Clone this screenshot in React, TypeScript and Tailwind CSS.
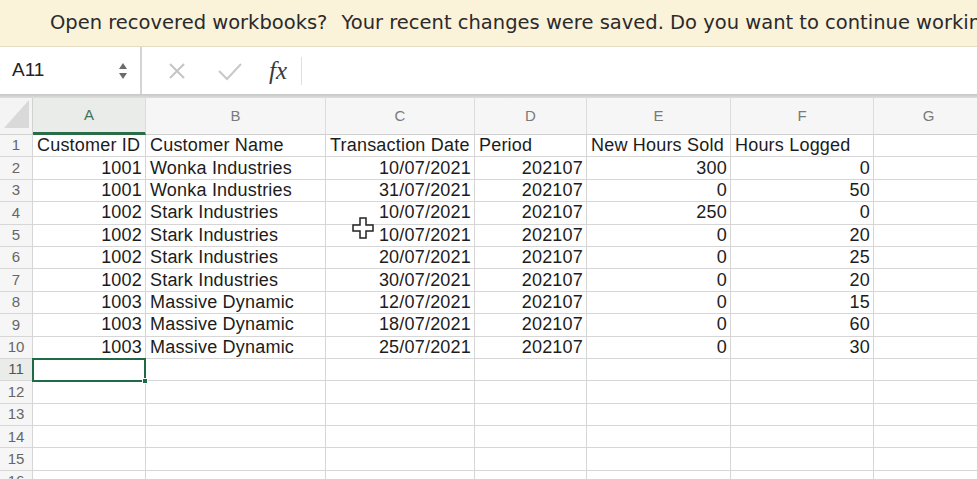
import { Fragment } from 'react';

type Row = [string, string, string, string, string, string];

const ROWS: Row[] = [
  ['1001', 'Wonka Industries', '10/07/2021', '202107', '300', '0'],
  ['1001', 'Wonka Industries', '31/07/2021', '202107', '0', '50'],
  ['1002', 'Stark Industries', '10/07/2021', '202107', '250', '0'],
  ['1002', 'Stark Industries', '10/07/2021', '202107', '0', '20'],
  ['1002', 'Stark Industries', '20/07/2021', '202107', '0', '25'],
  ['1002', 'Stark Industries', '30/07/2021', '202107', '0', '20'],
  ['1003', 'Massive Dynamic', '12/07/2021', '202107', '0', '15'],
  ['1003', 'Massive Dynamic', '18/07/2021', '202107', '0', '60'],
  ['1003', 'Massive Dynamic', '25/07/2021', '202107', '0', '30'],
];

const HEADERS = ['Customer ID', 'Customer Name', 'Transaction Date', 'Period', 'New Hours Sold', 'Hours Logged'];
const COLS = ['A', 'B', 'C', 'D', 'E', 'F', 'G'];

// columns with text content are left aligned, numbers/dates go right
const rightAligned = [true, false, true, true, true, true];

function Cell({ children, right, selected }: { children?: React.ReactNode; right?: boolean; selected?: boolean }) {
  return (
    <div
      className={`relative h-[22.4px] border-r border-b border-[#d6d6d6] bg-white flex items-center overflow-visible whitespace-nowrap text-[#1c1c1c] ${
        right ? 'justify-end pr-[3px]' : 'justify-start pl-[4px]'
      }`}
    >
      {children}
      {selected && (
        <div className="absolute -left-[1px] -top-[1px] w-[114px] h-[24px] border-2 border-[#1e6b45] z-10">
          <div className="absolute -right-[4px] -bottom-[4px] w-[6px] h-[6px] bg-[#1e6b45] border border-white" />
        </div>
      )}
    </div>
  );
}

export default function App() {
  return (
    <div className="w-[977px] h-[479px] overflow-hidden bg-white relative" style={{ fontFamily: '"Liberation Sans", Arial, sans-serif' }}>
      {/* Recovery banner */}
      <div
        className="h-[47px] bg-[#fbf2da] border-b border-[#e4dcc4] flex items-center pl-[50px] whitespace-nowrap text-[19.5px] text-[#2a2a2a]"
        style={{ fontFamily: '"DejaVu Sans", sans-serif' }}
      >
        <span>Open recovered workbooks?</span>
        <span className="ml-[14px]">Your recent changes were saved. Do you want to continue working</span>
      </div>

      {/* Formula bar */}
      <div className="h-[47px] flex items-stretch bg-white">
        <div className="w-[142px] flex items-center justify-between pl-[12px] pr-[12px] border-r-2 border-[#d4d4d4]">
          <span className="text-[19px] text-[#222]">A11</span>
          <svg width="10" height="22" viewBox="0 0 10 22">
            <path d="M5 3 L9 9 L1 9 Z" fill="#6b6b6b" />
            <path d="M5 19 L9 13 L1 13 Z" fill="#6b6b6b" />
          </svg>
        </div>
        <div className="flex items-center pl-[24px]">
          <svg width="22" height="22" viewBox="0 0 22 22" className="mr-[29px]">
            <path d="M4 4 L18 18 M18 4 L4 18" stroke="#c4c4c4" strokeWidth="2" fill="none" />
          </svg>
          <svg width="26" height="22" viewBox="0 0 26 22" className="mr-[26px]">
            <path d="M2 11 L10 19 L24 4" stroke="#c8c8c8" strokeWidth="2" fill="none" />
          </svg>
          <span className="text-[25px] italic text-[#3a3a3a]" style={{ fontFamily: '"Liberation Serif", serif' }}>
            fx
          </span>
          <div className="ml-[14px] w-[1px] h-[28px] bg-[#e0e0e0]" />
        </div>
      </div>

      {/* shadow band */}
      <div className="h-[4px] bg-gradient-to-b from-[#c6c6c6] to-[#dedede]" />

      {/* Grid */}
      <div className="grid grid-cols-[33px_113px_180px_149px_112px_144px_143px_110px] text-[18px] tracking-[0.2px]">
        {/* column header row */}
        <div className="h-[37px] bg-[#f4f4f4] border-r border-b border-[#d2d2d2] flex items-end justify-end pr-[3px] pb-[6px]">
          <svg width="25" height="28" viewBox="0 0 25 28">
            <path d="M25 0 L25 28 L0 28 Z" fill="#d9d9d9" />
          </svg>
        </div>
        {COLS.map((c) => (
          <div
            key={c}
            className={`h-[37px] flex items-center justify-center text-[15px] tracking-normal border-r border-[#dcdcdc] ${
              c === 'A' ? 'bg-[#e9ece9] text-[#3f7457] border-b-[3px] border-b-[#2a6b48]' : 'bg-[#f6f6f6] text-[#7a7a7a] border-b border-b-[#cfcfcf]'
            }`}
          >
            {c}
          </div>
        ))}

        {Array.from({ length: 16 }, (_, i) => {
          const n = i + 1;
          let values: string[] = ['', '', '', '', '', ''];
          if (n === 1) values = HEADERS;
          else if (n <= 10) values = ROWS[n - 2];
          return (
            <Fragment key={n}>
              <div
                className={`h-[22.4px] border-r border-b border-[#d6d6d6] flex items-center justify-center text-[15px] tracking-normal ${
                  n === 11 ? 'bg-[#e9ece9] text-[#555]' : 'bg-[#f6f6f6] text-[#666]'
                }`}
              >
                {n}
              </div>
              {values.map((v, j) => (
                <Cell key={j} right={n !== 1 && rightAligned[j]} selected={n === 11 && j === 0}>
                  {v}
                </Cell>
              ))}
              <Cell />
            </Fragment>
          );
        })}
      </div>

      {/* mouse cursor over C4/C5 */}
      <svg className="absolute left-[351px] top-[216px]" width="24" height="24" viewBox="0 0 24 24">
        <path
          d="M9 2 H15 V9 H22 V15 H15 V22 H9 V15 H2 V9 H9 Z"
          fill="white"
          stroke="#222"
          strokeWidth="1.5"
        />
      </svg>
    </div>
  );
}
